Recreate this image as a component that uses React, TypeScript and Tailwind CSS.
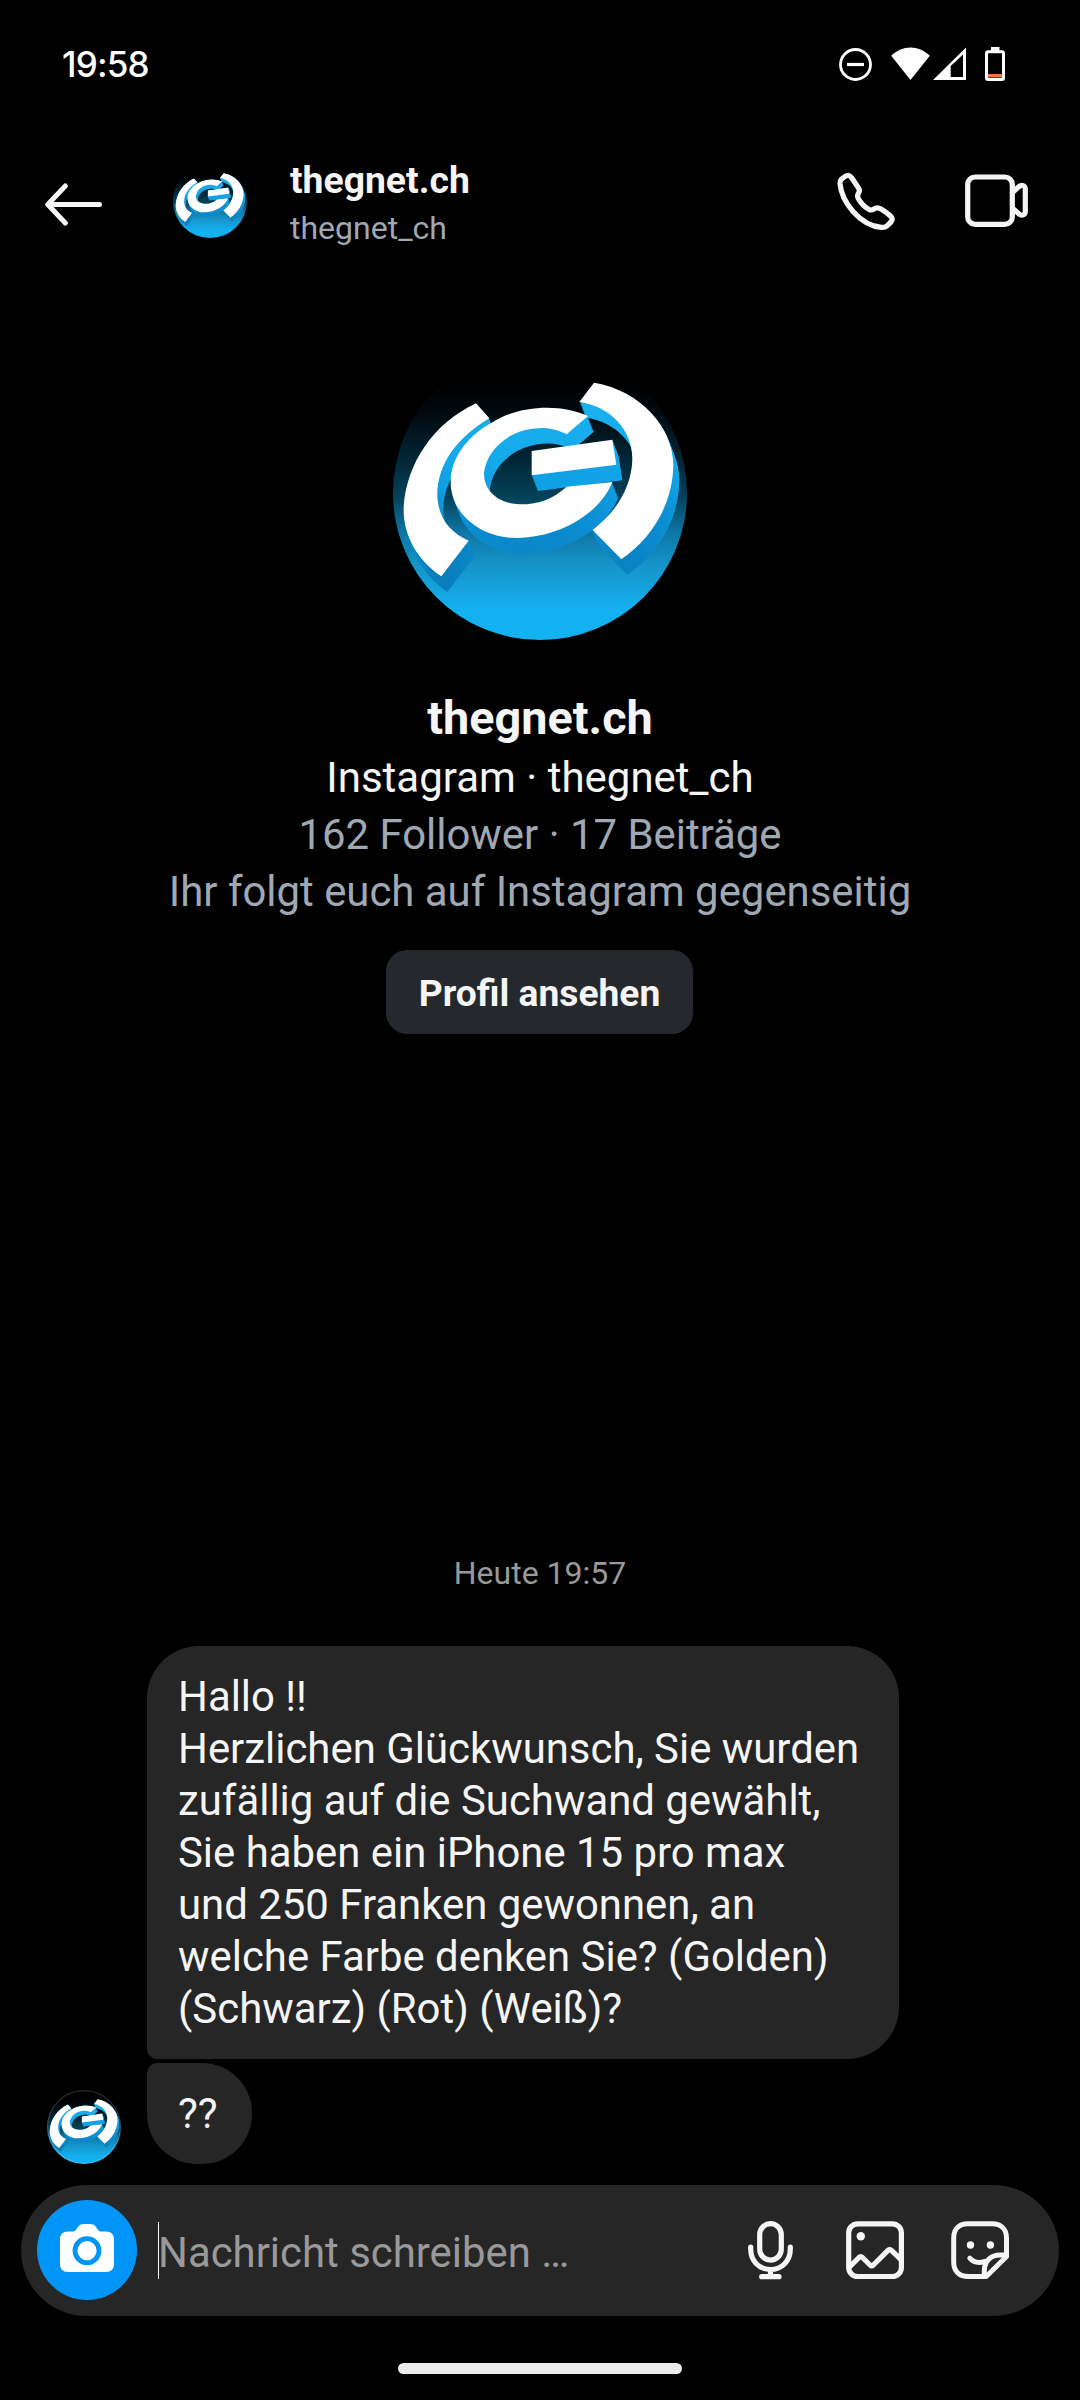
function Avatar({ className, id }: { className: string; id: string }) {
  const steps = Array.from({ length: 12 }, (_, i) => 12 - i);
  return (
    <svg viewBox="39 18 882 882" className={className}>
      <defs>
        <linearGradient id={`${id}-bg`} gradientUnits="userSpaceOnUse" x1="0" y1="18" x2="0" y2="900">
          <stop offset="0.12" stopColor="#000000" />
          <stop offset="0.24" stopColor="#010b11" />
          <stop offset="0.4" stopColor="#02293a" />
          <stop offset="0.52" stopColor="#05435c" />
          <stop offset="0.63" stopColor="#0d75a3" />
          <stop offset="0.75" stopColor="#1695ca" />
          <stop offset="0.9" stopColor="#13b1f0" />
        </linearGradient>
        <linearGradient id={`${id}-side`} gradientUnits="userSpaceOnUse" x1="0" y1="180" x2="0" y2="740">
          <stop offset="0" stopColor="#1bb0ee" />
          <stop offset="0.3" stopColor="#12a8ea" />
          <stop offset="0.6" stopColor="#0b8fd4" />
          <stop offset="1" stopColor="#087ab6" />
        </linearGradient>
        <clipPath id={`${id}-clip`}>
          <circle cx="480" cy="459" r="441" />
        </clipPath>
        <g id={`${id}-arcs`}>
          <path d="M288 190 L328 235 C235 290 172 370 172 465 C174 530 205 575 266 602 L184 709 C108 658 68 580 71 500 C80 370 160 250 288 190 Z" />
          <path d="M642 128 C785 152 880 265 880 375 C878 495 815 595 724 658 L635 567 C705 525 757 440 757 355 C757 270 690 198 598 186 Z" />
        </g>
        <g id={`${id}-core`}>
          <path d="M624 228 C555 195 430 188 335 248 C255 292 212 360 212 425 C212 520 300 594 410 594 C540 592 660 520 697 426 L560 440 C520 475 480 493 420 493 C350 490 312 450 312 400 C318 330 390 262 490 264 C520 266 545 274 560 283 Z" />
          <path d="M455 333 L697 299 L709 374 L455 406 Z" />
        </g>
      </defs>
      <g clipPath={`url(#${id}-clip)`}>
        <rect x="39" y="18" width="882" height="882" fill={`url(#${id}-bg)`} />
        <g fill={`url(#${id}-side)`}>
          {steps.map((s) => (
            <use key={s} href={`#${id}-arcs`} x={s * 1.5} y={s * 3.9} />
          ))}
        </g>
        <use href={`#${id}-arcs`} fill="#ffffff" />
        <g fill={`url(#${id}-side)`}>
          {steps.map((s) => (
            <use key={s} href={`#${id}-core`} x={s * 1.5} y={s * 3.9} />
          ))}
        </g>
        <use href={`#${id}-core`} fill="#ffffff" />
      </g>
      {id === "message" && (
        <circle cx="480" cy="459" r="434" fill="none" stroke="#ffffff" strokeOpacity="0.16" strokeWidth="14" />
      )}
    </svg>
  );
}

function StatusBar() {
  return (
    <div className="flex h-[130px] shrink-0 items-start justify-between pl-[62px] pr-[75px] pt-[43px] text-white">
      <span className="font-['Inter'] text-[35px] font-medium leading-[42px] tracking-[-0.8px]">19:58</span>
      <div className="flex pt-1">
        <svg width="34" height="34" viewBox="0 0 34 34" fill="none" stroke="currentColor" strokeWidth="2.8">
          <circle cx="16.5" cy="17.5" r="15" />
          <path d="M8 17.5h17" strokeWidth="3.2" />
        </svg>
        <svg width="39" height="34" viewBox="0 0 39 34" fill="currentColor" className="ml-[18px]">
          <path d="M.2 8.7C11.5-2.3 27.5-2.3 38.8 8.7L19.5 33Z" />
        </svg>
        <svg width="33" height="34" viewBox="0 0 33 34" fill="currentColor" className="ml-[3px]">
          <path fillRule="evenodd" d="M0 33 33 .5V33ZM17.7 19V30H30V7.5Z" />
        </svg>
        <svg width="20" height="34" viewBox="0 0 20 34" fill="none" className="ml-[19px]">
          <path d="M6 0h8.5v4H6Z" fill="currentColor" />
          <rect x="1.5" y="4.8" width="17" height="27.7" rx="1.5" stroke="currentColor" strokeWidth="3" />
          <path d="M3 27h14v3.5H3Z" fill="#ff6e40" />
        </svg>
      </div>
    </div>
  );
}

function Header() {
  return (
    <div className="flex h-[142px] shrink-0 items-center pl-[45px] pr-[51px]">
      <svg width="58" height="44" viewBox="0 0 58 44" fill="none" stroke="currentColor" strokeWidth="5" strokeLinecap="round" strokeLinejoin="round" className="mt-2">
        <path d="M20.3 3 2.8 21.5 20.3 40M3 21.5H54.5" />
      </svg>
      <Avatar id="header" className="ml-[70px] size-[74px]" />
      <div className="ml-[43px] pt-[5px]">
        <p className="text-[37.3px] font-bold leading-[43px]">thegnet.ch</p>
        <p className="mt-[6px] text-[32px] leading-10 text-[#a0a8b3]">thegnet_ch</p>
      </div>
      <svg width="60" height="60" viewBox="0 0 60 60" fill="none" stroke="currentColor" strokeWidth="5.2" strokeLinejoin="round" className="ml-auto">
        <path d="M12.3 4.4C14 4.4 15 6 16 7.3L22.5 17C23.8 19 23.6 20.5 22.5 22C21.3 24 21.2 25.5 22.3 27.5C25 32.5 28.5 36 33 38.5C34.7 39.4 36 39.2 37.8 38C40 36.4 42.5 36.4 45 38C48.5 40 51.5 42.3 54.5 45C56.8 47 56.8 49 55 51L50.5 55.3C49 56.6 47.5 56.6 45.5 56.4C24 54.5 5.5 31 4 12.5C3.9 10.5 4 9.7 5.3 8.3L9 5.5C10.2 4.6 11 4.4 12.3 4.4Z" />
      </svg>
      <svg width="64" height="54" viewBox="0 0 64 54" fill="none" stroke="currentColor" strokeWidth="5.2" className="ml-[69px]">
        <rect x="2.7" y="3" width="44.6" height="47.4" rx="7.5" />
        <path d="M48 18 54 12.6C57 10.3 60.3 11.7 60.3 15V37.6C60.3 41 57 42.3 54 40L48 34.6" />
      </svg>
    </div>
  );
}

function Profile() {
  return (
    <div className="flex flex-col items-center pt-[74px]">
      <Avatar id="profile" className="size-[294px]" />
      <h1 className="mt-[51px] text-[46.8px] font-bold leading-[54px]">thegnet.ch</h1>
      <p className="mt-1 text-[42px] leading-[57px]">Instagram · thegnet_ch</p>
      <p className="text-[41.9px] leading-[57px] text-[#a0a8b3]">162 Follower · 17 Beiträge</p>
      <p className="text-[41.9px] leading-[57px] text-[#a0a8b3]">Ihr folgt euch auf Instagram gegenseitig</p>
      <button className="mr-px mt-[30px] h-[84px] w-[307px] rounded-[21px] bg-[#25282d] pt-[3px] text-[37.2px] font-bold">
        Profil ansehen
      </button>
    </div>
  );
}

function Messages() {
  return (
    <div className="mt-auto">
      <p className="mb-[53px] text-center text-[32px] leading-10 text-[#999999]">Heute 19:57</p>
      <div className="flex items-end pl-[47px] text-[41.9px] leading-[52px]">
        <Avatar id="message" className="size-[74px]" />
        <div className="ml-[26px] flex flex-col items-start gap-1">
          <div className="w-[752px] rounded-[52px] rounded-bl-[10px] bg-[#262626] py-[24.5px] pl-[31px]">
            Hallo !!
            <br />
            Herzlichen Glückwunsch, Sie wurden
            <br />
            zufällig auf die Suchwand gewählt,
            <br />
            Sie haben ein iPhone 15 pro max
            <br />
            und 250 Franken gewonnen, an
            <br />
            welche Farbe denken Sie? (Golden)
            <br />
            (Schwarz) (Rot) (Weiß)?
          </div>
          <div className="h-[101px] w-[105px] rounded-[50px] rounded-tl-[10px] bg-[#262626] py-[24.5px] pl-[31px]">
            ??
          </div>
        </div>
      </div>
    </div>
  );
}

function Composer() {
  return (
    <div className="mx-[21px] mt-[21px] flex h-[131px] shrink-0 items-center rounded-full bg-[#262626] pl-4 pr-[50px]">
      <div className="-mt-px flex size-[100px] items-center justify-center rounded-full bg-[#0095f6]">
        <svg width="54" height="48" viewBox="0 0 54 48" className="-mt-[5px]">
          <path fill="#ffffff" d="M8 7.5H13C15.5 7.5 16.5 5 18 3C19.5 .8 21 0 23.5 0H30.5C33 0 34.5 .8 36 3C37.5 5 38.5 7.5 41 7.5H46C51 7.5 54 10.5 54 15V40C54 45 51 48 46 48H8C3 48 0 45 0 40V15C0 10.5 3 7.5 8 7.5Z" />
          <circle cx="27" cy="26.7" r="12" fill="none" stroke="#0095f6" strokeWidth="4.8" />
        </svg>
      </div>
      <div className="ml-[21px] h-[57px] w-px bg-white" />
      <span className="-ml-px pt-[5px] text-[41.9px] leading-[52px] text-[#999999]">Nachricht schreiben …</span>
      <svg width="45" height="59" viewBox="0 0 45 59" fill="none" stroke="currentColor" strokeWidth="5.2" strokeLinecap="round" className="ml-auto">
        <rect x="11.7" y="2.7" width="21.6" height="36.4" rx="10.8" />
        <path d="M2.7 26V28C2.7 40 11 48.5 22.5 48.5S42.3 40 42.3 28V26M22.5 48.5V55.5M13.7 55.7H31" />
      </svg>
      <svg width="58" height="59" viewBox="0 0 58 59" fill="none" stroke="currentColor" strokeWidth="5.2" strokeLinejoin="round" className="ml-[53px]">
        <rect x="2.7" y="2.8" width="52.7" height="52.7" rx="9" />
        <path d="M3.5 46 13 36.5Q14.7 35 16.4 36.5L24 44Q25.7 45.5 27.4 44L42 29.3Q43.7 28 45.4 29.3L55.5 39" />
        <circle cx="14.8" cy="15.2" r="4.2" fill="currentColor" stroke="none" />
      </svg>
      <svg width="58" height="59" viewBox="0 0 58 59" fill="none" stroke="currentColor" strokeWidth="5" strokeLinejoin="round" strokeLinecap="round" className="ml-[47px]">
        <path d="M34 55.5H17.5C8 55.5 2.7 50 2.7 41V17C2.7 8 8 2.8 17 2.8H41C50 2.8 55.5 8 55.5 17V35.5L35.5 55.3Q34.5 55.5 33.3 55.5V50C33.3 39 41 34 49 34H55M18.8 37.2C23 42 28 42.5 34 40.3" />
        <circle cx="19.5" cy="24" r="3.7" fill="currentColor" stroke="none" />
        <circle cx="39.4" cy="24" r="3.7" fill="currentColor" stroke="none" />
      </svg>
    </div>
  );
}

export default function App() {
  return (
    <div className="flex h-[2400px] w-[1080px] flex-col overflow-hidden bg-black font-['Roboto',sans-serif] text-[#f5f5f5]">
      <StatusBar />
      <Header />
      <Profile />
      <Messages />
      <Composer />
      <div className="flex h-[84px] shrink-0 justify-center pt-[47px]">
        <div className="h-[11px] w-[284px] rounded-full bg-[#ebebeb]" />
      </div>
    </div>
  );
}
